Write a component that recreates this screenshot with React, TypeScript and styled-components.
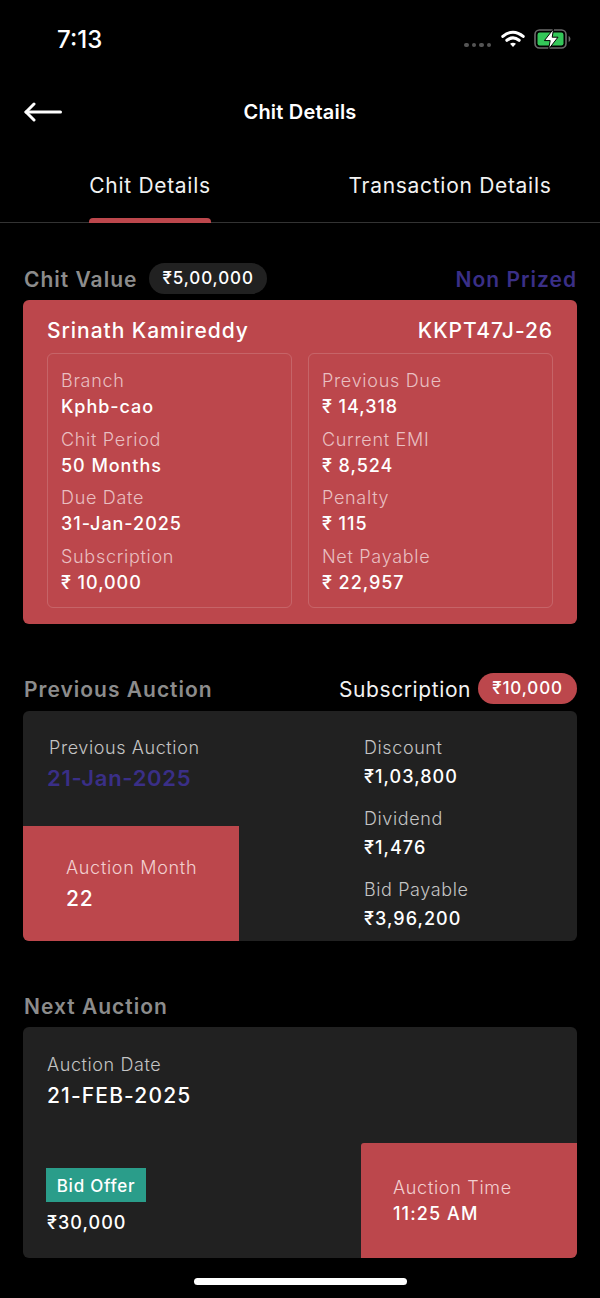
import styled, { createGlobalStyle } from "styled-components";

const RED = "#bc474c";
const PANEL = "#212121";
const INDIGO = "#3a2f87";

const GlobalStyle = createGlobalStyle`
  html, body {
    margin: 0;
    padding: 0;
    background: #000;
  }
  * {
    box-sizing: border-box;
  }
`;

const duesLeft = [
  ["Branch", "Kphb-cao"],
  ["Chit Period", "50 Months"],
  ["Due Date", "31-Jan-2025"],
  ["Subscription", "₹ 10,000"],
];

const duesRight = [
  ["Previous Due", "₹ 14,318"],
  ["Current EMI", "₹ 8,524"],
  ["Penalty", "₹ 115"],
  ["Net Payable", "₹ 22,957"],
];

const auctionStats = [
  ["Discount", "₹1,03,800"],
  ["Dividend", "₹1,476"],
  ["Bid Payable", "₹3,96,200"],
];

export default function App() {
  return (
    <Screen>
      <GlobalStyle />
      <StatusBar>
        <Clock>7:13</Clock>
        <StatusIcons>
          <Signal>
            <i />
            <i />
            <i />
            <i />
          </Signal>
          <svg width="24" height="20" viewBox="0 0 26 20" fill="none">
            <path d="M2 7.2C9 1.2 17 1.2 24 7.2" stroke="#fff" strokeWidth="3.4" strokeLinecap="round" />
            <path d="M6.4 11.4C10.6 8 15.4 8 19.6 11.4" stroke="#fff" strokeWidth="3.4" strokeLinecap="round" />
            <path d="M9.8 15.2L13 18.6L16.2 15.2C14.2 13.6 11.8 13.6 9.8 15.2Z" fill="#fff" />
          </svg>
          <svg width="38" height="22" viewBox="0 0 38 22" fill="none">
            <rect x="1" y="2" width="31" height="18" rx="4.5" stroke="#6b6b6b" strokeWidth="1.6" />
            <rect x="3.5" y="4.5" width="26" height="13" rx="2.2" fill="#34c759" />
            <path d="M34.6 8V14C35.8 13.5 36.4 12.4 36.4 11C36.4 9.6 35.8 8.5 34.6 8Z" fill="#6b6b6b" />
            <path d="M19.6 0.8L10.4 12.6H16.2L14.6 21.2L24 9.2H18.2L19.6 0.8Z" fill="#fff" stroke="#000" strokeWidth="1" />
          </svg>
        </StatusIcons>
      </StatusBar>

      <NavBar>
        <BackButton>
          <svg width="38" height="20" viewBox="0 0 38 20" fill="none">
            <path d="M2 10H36.5" stroke="#fff" strokeWidth="3" strokeLinecap="round" />
            <path d="M10 2L2 10L10 18" stroke="#fff" strokeWidth="3" strokeLinecap="round" strokeLinejoin="round" />
          </svg>
        </BackButton>
        <NavTitle>Chit Details</NavTitle>
      </NavBar>

      <Tabs>
        <Tab $active>
          <span>Chit Details</span>
        </Tab>
        <Tab>
          <span>Transaction Details</span>
        </Tab>
      </Tabs>

      <Content>
        <Section>
          <SectionHead>
            <HeadGroup>
              <SectionTitle>Chit Value</SectionTitle>
              <Pill>₹5,00,000</Pill>
            </HeadGroup>
            <Status>Non Prized</Status>
          </SectionHead>
          <MemberCard>
            <MemberRow>
              <span>Srinath Kamireddy</span>
              <span>KKPT47J-26</span>
            </MemberRow>
            <DuesGrid>
              {[duesLeft, duesRight].map((col) => (
                <DuesBox key={col[0][0]}>
                  {col.map(([label, value]) => (
                    <div key={label}>
                      <DuesLabel>{label}</DuesLabel>
                      <DuesValue>{value}</DuesValue>
                    </div>
                  ))}
                </DuesBox>
              ))}
            </DuesGrid>
          </MemberCard>
        </Section>

        <Section $top={49}>
          <SectionHead $height={38}>
            <SectionTitle>Previous Auction</SectionTitle>
            <HeadGroup $gap={7}>
              <SubLabel>Subscription</SubLabel>
              <Pill $red>₹10,000</Pill>
            </HeadGroup>
          </SectionHead>
          <DarkCard $height={230}>
            <LeftColumn>
              <PrevBlock>
                <MutedLabel>Previous Auction</MutedLabel>
                <PrevDate>21-Jan-2025</PrevDate>
              </PrevBlock>
              <RedTile $left>
                <TileLabel>Auction Month</TileLabel>
                <MonthValue>22</MonthValue>
              </RedTile>
            </LeftColumn>
            <StatList>
              {auctionStats.map(([label, value]) => (
                <div key={label}>
                  <MutedLabel>{label}</MutedLabel>
                  <StatValue>{value}</StatValue>
                </div>
              ))}
            </StatList>
          </DarkCard>
        </Section>

        <Section $top={49}>
          <SectionHead>
            <SectionTitle>Next Auction</SectionTitle>
          </SectionHead>
          <DarkCard $height={231}>
            <LeftColumn>
              <NextBlock>
                <MutedLabel>Auction Date</MutedLabel>
                <NextDate>21-FEB-2025</NextDate>
              </NextBlock>
              <OfferBlock>
                <OfferTag>Bid Offer</OfferTag>
                <StatValue>₹30,000</StatValue>
              </OfferBlock>
            </LeftColumn>
            <RightColumn>
              <RedTile>
                <TileLabel>Auction Time</TileLabel>
                <TimeValue>11:25 AM</TimeValue>
              </RedTile>
            </RightColumn>
          </DarkCard>
        </Section>
      </Content>

      <HomeBar>
        <span />
      </HomeBar>
    </Screen>
  );
}

const Screen = styled.div`
  width: 600px;
  height: 1298px;
  background: #000;
  color: #fff;
  font-family: Inter, "Noto Sans", sans-serif;
  overflow: hidden;
  display: flex;
  flex-direction: column;
`;

const StatusBar = styled.div`
  height: 78px;
  flex: none;
  display: flex;
  align-items: center;
  justify-content: space-between;
  padding: 0 28px 0 57px;
`;

const Clock = styled.span`
  font-size: 24px;
  font-weight: 500;
`;

const StatusIcons = styled.div`
  display: flex;
  align-items: center;
  gap: 9px;
`;

const Signal = styled.div`
  display: flex;
  gap: 3px;
  margin-top: 12px;
  margin-right: 1px;

  i {
    width: 4.5px;
    height: 4.5px;
    border-radius: 50%;
    background: #555;
  }
`;

const NavBar = styled.div`
  position: relative;
  height: 67px;
  flex: none;
  display: flex;
  align-items: center;
  justify-content: center;
`;

const BackButton = styled.div`
  position: absolute;
  left: 24px;
  top: 24px;
  display: flex;
`;

const NavTitle = styled.div`
  font-size: 20px;
  font-weight: 600;
  letter-spacing: 0.2px;
`;

const Tabs = styled.div`
  height: 78px;
  flex: none;
  display: grid;
  grid-template-columns: 1fr 1fr;
  border-bottom: 1px solid #333;
`;

const Tab = styled.div<{ $active?: boolean }>`
  display: flex;
  justify-content: center;

  span {
    position: relative;
    padding-top: 28px;
    font-size: 21px;
    line-height: 26px;
    letter-spacing: 0.7px;
    color: #f2f2f2;
  }

  span::after {
    content: "";
    display: ${(p) => (p.$active ? "block" : "none")};
    position: absolute;
    left: 0;
    right: 0;
    bottom: -1px;
    height: 5px;
    border-radius: 4px 4px 0 0;
    background: ${RED};
  }
`;

const Content = styled.div`
  flex: 1;
  padding: 40px 23px 0;
`;

const Section = styled.section<{ $top?: number }>`
  margin-top: ${(p) => p.$top ?? 0}px;
`;

const SectionHead = styled.div<{ $height?: number }>`
  height: ${(p) => p.$height ?? 37}px;
  padding-left: 1px;
  display: flex;
  align-items: flex-start;
  justify-content: space-between;
`;

const HeadGroup = styled.div<{ $gap?: number }>`
  display: flex;
  align-items: flex-start;
  gap: ${(p) => p.$gap ?? 12}px;
`;

const SectionTitle = styled.div`
  font-size: 21px;
  line-height: 33px;
  font-weight: 600;
  letter-spacing: 1px;
  color: #8c8c8c;
`;

const Status = styled(SectionTitle)`
  color: ${INDIGO};
`;

const SubLabel = styled.span`
  font-size: 21px;
  line-height: 33px;
  letter-spacing: 0.6px;
  color: #f2f2f2;
`;

const Pill = styled.span<{ $red?: boolean }>`
  height: 31px;
  padding: 0 ${(p) => (p.$red ? 14 : 13)}px;
  border-radius: 16px;
  background: ${(p) => (p.$red ? RED : "#212121")};
  font-size: 17px;
  line-height: 31px;
  font-weight: 500;
  letter-spacing: 0.9px;
  color: #fff;
`;

const MemberCard = styled.div`
  height: 324px;
  border-radius: 6px;
  background: ${RED};
  padding: 18px 24px 16px;
`;

const MemberRow = styled.div`
  height: 35px;
  display: flex;
  justify-content: space-between;
  font-size: 21px;
  line-height: 26px;
  font-weight: 500;
  letter-spacing: 0.95px;
`;

const DuesGrid = styled.div`
  display: grid;
  grid-template-columns: 245px 245px;
  justify-content: space-between;
`;

const DuesBox = styled.div`
  height: 255px;
  border: 1px solid rgba(255, 255, 255, 0.16);
  border-radius: 6px;
  padding: 15px 13px 0;
  display: flex;
  flex-direction: column;
  gap: 8.7px;
`;

const DuesLabel = styled.div`
  font-size: 18px;
  line-height: 24px;
  letter-spacing: 0.7px;
  color: #e9bfc1;
  font-weight: 300;
`;

const DuesValue = styled.div`
  margin-top: 2px;
  font-size: 18px;
  line-height: 24px;
  font-weight: 450;
  letter-spacing: 0.95px;
`;

const DarkCard = styled.div<{ $height: number }>`
  height: ${(p) => p.$height}px;
  border-radius: 6px;
  background: ${PANEL};
  display: grid;
  grid-template-columns: 338px 1fr;
  overflow: hidden;
`;

const LeftColumn = styled.div`
  display: flex;
  flex-direction: column;
  justify-content: space-between;
`;

const RightColumn = styled.div`
  display: flex;
  align-items: flex-end;
  justify-content: flex-end;
`;

const PrevBlock = styled.div`
  padding: 25px 0 0 26px;
`;

const MutedLabel = styled.div`
  font-size: 18px;
  line-height: 24px;
  font-weight: 300;
  letter-spacing: 0.6px;
  color: #c4c4c4;
`;

const PrevDate = styled.div`
  margin: 5px 0 0 -2px;
  font-size: 22px;
  line-height: 26px;
  font-weight: 600;
  letter-spacing: 0.7px;
  color: ${INDIGO};
`;

const RedTile = styled.div<{ $left?: boolean }>`
  width: 216px;
  height: 115px;
  background: ${RED};
  padding: ${(p) => (p.$left ? "30px 0 0 43px" : "33px 0 0 32px")};
  border-top-left-radius: ${(p) => (p.$left ? 0 : 3)}px;
`;

const TileLabel = styled.div`
  font-size: 18px;
  line-height: 24px;
  font-weight: 300;
  letter-spacing: 0.7px;
  color: #f2cfd0;
`;

const MonthValue = styled.div`
  margin-top: 7px;
  font-size: 21px;
  line-height: 24px;
  font-weight: 450;
  letter-spacing: 0.8px;
`;

const TimeValue = styled.div`
  margin-top: 2px;
  font-size: 18px;
  line-height: 24px;
  font-weight: 450;
  letter-spacing: 1.1px;
`;

const StatList = styled.div`
  padding: 25px 0 0 3px;
  display: flex;
  flex-direction: column;
  gap: 18px;
`;

const StatValue = styled.div`
  margin-top: 5px;
  font-size: 18px;
  line-height: 24px;
  font-weight: 450;
  letter-spacing: 1.05px;
`;

const NextBlock = styled.div`
  padding: 26px 0 0 24px;
`;

const NextDate = styled.div`
  margin-top: 6px;
  font-size: 21px;
  line-height: 26px;
  font-weight: 450;
  letter-spacing: 1.15px;
`;

const OfferBlock = styled.div`
  padding: 0 0 23px 24px;
`;

const OfferTag = styled.div`
  width: 100px;
  height: 34px;
  margin: 0 0 9px -1px;
  background: #2a9d8a;
  text-align: center;
  font-size: 17px;
  line-height: 36px;
  font-weight: 450;
  letter-spacing: 0.75px;
`;

const HomeBar = styled.div`
  height: 40px;
  flex: none;
  display: flex;
  justify-content: center;

  span {
    width: 213px;
    height: 7px;
    margin-top: 20px;
    border-radius: 4px;
    background: #fff;
  }
`;
